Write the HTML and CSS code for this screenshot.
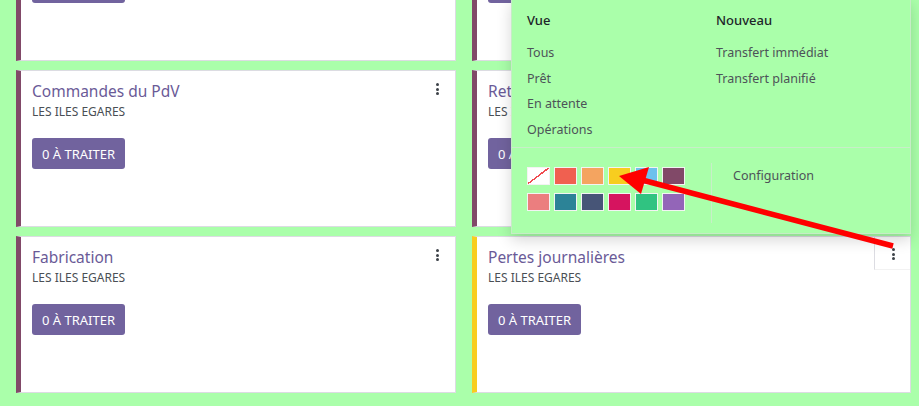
FILE: index.html
```html
<!DOCTYPE html>
<html lang="fr">
<head>
<meta charset="utf-8">
<link rel="stylesheet" href="styles.css">
</head>
<body>
<div class="page">
  <div class="grid">
    <div class="card c-purple">
      <div class="card-head"><div class="title">Réceptions</div><span class="kebab"><i></i><i></i><i></i></span></div>
      <div class="sub">LES ILES EGARES</div>
      <button class="btn">0 À TRAITER</button>
    </div>
    <div class="card c-purple">
      <div class="card-head"><div class="title">Livraisons</div><span class="kebab"><i></i><i></i><i></i></span></div>
      <div class="sub">LES ILES EGARES</div>
      <button class="btn">0 À TRAITER</button>
    </div>
    <div class="card c-purple">
      <div class="card-head"><div class="title">Commandes du PdV</div><span class="kebab"><i></i><i></i><i></i></span></div>
      <div class="sub">LES ILES EGARES</div>
      <button class="btn">0 À TRAITER</button>
    </div>
    <div class="card c-purple">
      <div class="card-head"><div class="title">Retours</div><span class="kebab"><i></i><i></i><i></i></span></div>
      <div class="sub">LES ILES EGARES</div>
      <button class="btn">0 À TRAITER</button>
    </div>
    <div class="card c-purple">
      <div class="card-head"><div class="title">Fabrication</div><span class="kebab"><i></i><i></i><i></i></span></div>
      <div class="sub">LES ILES EGARES</div>
      <button class="btn">0 À TRAITER</button>
    </div>
    <div class="card c-yellow">
      <div class="card-head"><div class="title">Pertes journalières</div><span class="kebab active"><i></i><i></i><i></i></span></div>
      <div class="sub">LES ILES EGARES</div>
      <button class="btn">0 À TRAITER</button>
    </div>
  </div>

  <div class="menu">
    <div class="menu-top">
      <div class="menu-col">
        <div class="menu-h">Vue</div>
        <div class="menu-i">Tous</div>
        <div class="menu-i">Prêt</div>
        <div class="menu-i">En attente</div>
        <div class="menu-i">Opérations</div>
      </div>
      <div class="menu-col">
        <div class="menu-h">Nouveau</div>
        <div class="menu-i">Transfert immédiat</div>
        <div class="menu-i">Transfert planifié</div>
      </div>
    </div>
    <div class="menu-bottom">
      <div class="swatches">
        <span class="sw sw-none"></span>
        <span class="sw sw1"></span>
        <span class="sw sw2"></span>
        <span class="sw sw3"></span>
        <span class="sw sw4"></span>
        <span class="sw sw5"></span>
        <span class="sw sw6"></span>
        <span class="sw sw7"></span>
        <span class="sw sw8"></span>
        <span class="sw sw9"></span>
        <span class="sw sw10"></span>
        <span class="sw sw11"></span>
      </div>
      <div class="config">Configuration</div>
    </div>
  </div>

  <svg class="arrow" width="919" height="406" viewBox="0 0 919 406">
    <line x1="642" y1="180" x2="893" y2="246" stroke="#ff0000" stroke-width="5.5"/>
    <polygon points="619,176 649,167 641,194" fill="#ff0000"/>
  </svg>
</div>
</body>
</html>
```

FILE: styles.css
```css
html, body {
  margin: 0;
  padding: 0;
}
body {
  background: #aaffaa;
  font-family: "Noto Sans", "Open Sans", sans-serif;
  width: 919px;
  height: 406px;
  overflow: hidden;
}
.page {
  position: relative;
  width: 919px;
  height: 406px;
  overflow: hidden;
}
.grid {
  display: grid;
  grid-template-columns: 440px 439px;
  grid-auto-rows: 157px;
  column-gap: 16px;
  row-gap: 9px;
  padding-left: 16px;
  margin-top: -96px;
}
.card {
  background: #fff;
  border: 1px solid #dcdce2;
  border-left-width: 5px;
  padding: 9px 12px 0 11px;
  box-sizing: border-box;
}
.c-purple { border-left-color: #814968; }
.c-yellow { border-left-color: #f7cd1f; }
.card-head {
  display: flex;
  justify-content: space-between;
  align-items: flex-start;
  position: relative;
}
.title {
  font-size: 15.5px;
  line-height: 22px;
  color: #6a5a97;
}
.sub {
  font-size: 12px;
  line-height: 18px;
  color: #4a4f55;
  margin-top: 1px;
}
.btn {
  margin-top: 17px;
  background: #71639e;
  color: #fff;
  border: 0;
  border-radius: 3px;
  font-family: inherit;
  font-size: 13px;
  height: 31px;
  padding: 0 10px;
  display: block;
}
.kebab {
  display: flex;
  flex-direction: column;
  align-items: center;
  gap: 1.5px;
  padding-top: 3px;
  margin-right: 4px;
}
.kebab i {
  display: block;
  width: 3px;
  height: 3px;
  border-radius: 50%;
  background: #3d4248;
}
.kebab.active {
  position: absolute;
  right: -12px;
  top: -9px;
  width: 36px;
  height: 33px;
  box-sizing: border-box;
  padding-top: 11px;
  padding-left: 1px;
  background: #fff;
  border-left: 1px solid #dcdce2;
  border-bottom: 1px solid #f2f2f2;
  margin: 0;
}
.menu {
  position: absolute;
  left: 511px;
  top: -2px;
  width: 400px;
  height: 236px;
  box-sizing: border-box;
  background: #aaffaa;
  border: 1px solid #c6ecc6;
  box-shadow: 0 6px 14px rgba(0, 0, 0, 0.16);
}
.menu-top {
  display: flex;
  padding: 11px 0 0 15px;
  height: 149px;
  box-sizing: border-box;
  border-bottom: 1px solid #c8eec8;
}
.menu-col {
  width: 189px;
}
.menu-h {
  font-size: 13px;
  font-weight: 500;
  color: #212529;
  line-height: 20px;
  margin-bottom: 13px;
}
.menu-i {
  font-size: 12.5px;
  color: #4d5358;
  line-height: 20px;
  margin-bottom: 5.7px;
}
.menu-bottom {
  display: flex;
  padding: 19px 0 0 15px;
}
.swatches {
  display: grid;
  grid-template-columns: repeat(6, 23px);
  grid-auto-rows: 18px;
  column-gap: 4px;
  row-gap: 8px;
  width: 168px;
  padding-right: 16px;
  height: 44px;
}
.menu-bottom .config {
  border-left: 1px solid #c8eec8;
  margin-top: -4px;
  height: 60px;
  padding-left: 21px;
  font-size: 12.5px;
  line-height: 20px;
  color: #4d5358;
  padding-top: 3px;
  box-sizing: border-box;
}
.sw {
  display: block;
  box-sizing: border-box;
  border: 1px solid #f3f3f3;
}
.sw-none {
  background: #fff linear-gradient(to bottom right, transparent calc(50% - 1px), #f04b50 calc(50% - 1px), #f04b50 calc(50% + 0.5px), transparent calc(50% + 0.5px));
}
.sw1 { background: #f06050; }
.sw2 { background: #f4a460; }
.sw3 { background: #f7cd1f; }
.sw4 { background: #6cc1ed; }
.sw5 { background: #814968; }
.sw6 { background: #eb7e7f; }
.sw7 { background: #2c8397; }
.sw8 { background: #475577; }
.sw9 { background: #d6145f; }
.sw10 { background: #30c381; }
.sw11 { background: #9365b8; }
.arrow {
  position: absolute;
  left: 0;
  top: 0;
  pointer-events: none;
}
```
